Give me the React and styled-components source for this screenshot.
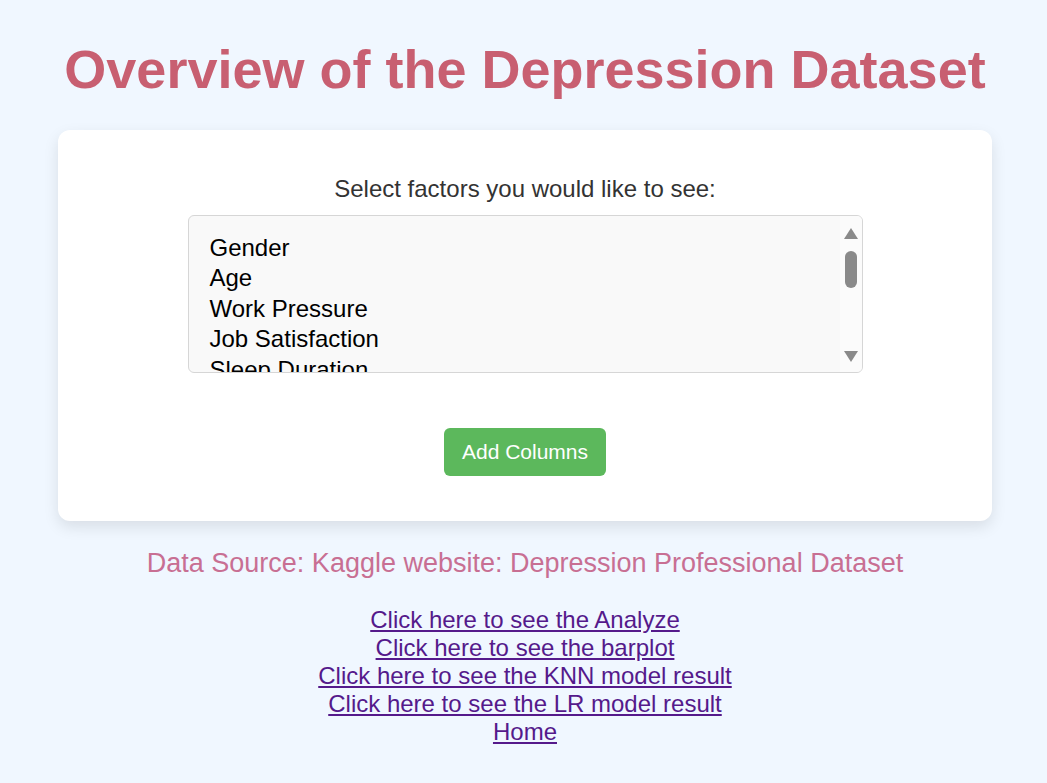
import React from 'react'
import styled, { createGlobalStyle } from 'styled-components'

const factors = [
  'Gender',
  'Age',
  'Work Pressure',
  'Job Satisfaction',
  'Sleep Duration',
  'Dietary Habits',
  'Have you ever had suicidal thoughts ?',
  'Work Hours',
  'Financial Stress',
  'Family History of Mental Illness'
]

const links = [
  'Click here to see the Analyze',
  'Click here to see the barplot',
  'Click here to see the KNN model result',
  'Click here to see the LR model result',
  'Home'
]

const App = () => {
  return (<>
    <GlobalStyle />
    <Page>
      <Title>Overview of the Depression Dataset</Title>
      <Card>
        <Label>Select factors you would like to see:</Label>
        <ListBox role='listbox' aria-multiselectable='true'>
          <OptionList>
            {factors.map((f) => (
              <Option key={f} role='option'>{f}</Option>
            ))}
          </OptionList>
          <ScrollTrack>
            <Arrow $dir='up' />
            <Thumb />
            <Spacer />
            <Arrow $dir='down' />
          </ScrollTrack>
        </ListBox>
        <AddButton type='button'>Add Columns</AddButton>
      </Card>
      <Source>Data Source: Kaggle website: Depression Professional Dataset</Source>
      <Links>
        {links.map((l) => (
          <Link key={l} href='#'>{l}</Link>
        ))}
      </Links>
    </Page>
  </>)
}

const GlobalStyle = createGlobalStyle`
  html, body {
    margin: 0;
    background: #f0f7ff;
  }
  body {
    font-family: "Liberation Sans", Arial, sans-serif;
  }
`

const Page = styled.div`
  display: flex;
  flex-direction: column;
  align-items: center;
  min-height: 783px;
  padding: 0 0 30px 3px;
  box-sizing: border-box;
`

const Title = styled.h1`
  font-size: 54px;
  font-weight: bold;
  color: #c85f71;
  margin: 38px 0 30px;
  text-align: center;
`

const Card = styled.div`
  width: 934px;
  box-sizing: border-box;
  background: #fff;
  border-radius: 12px;
  box-shadow: 0 6px 15px rgba(0, 0, 0, 0.1);
  padding: 45px 0;
  display: flex;
  flex-direction: column;
  align-items: center;
`

const Label = styled.label`
  font-size: 24px;
  color: #333;
  margin-bottom: 12px;
`

const ListBox = styled.div`
  width: 675px;
  height: 158px;
  box-sizing: border-box;
  display: flex;
  background: #f9f9f9;
  border: 1px solid #d6d6d6;
  border-radius: 6px;
  overflow: hidden;
  margin-bottom: 55px;
`

const OptionList = styled.div`
  flex: 1;
  overflow: hidden;
  padding: 17px 19px 15px 21px;
`

const Option = styled.div`
  font-size: 24px;
  line-height: 30.4px;
  color: #000;
  white-space: nowrap;
`

const ScrollTrack = styled.div`
  width: 22px;
  display: flex;
  flex-direction: column;
  align-items: center;
  padding: 12px 0 10px;
  background: #fbfbfb;
`

const Arrow = styled.div`
  width: 0;
  height: 0;
  border-left: 7.5px solid transparent;
  border-right: 7.5px solid transparent;
  ${({ $dir }) => $dir === 'up'
    ? 'border-bottom: 11px solid #8a8a8a;'
    : 'border-top: 11px solid #8a8a8a;'}
`

const Thumb = styled.div`
  width: 12px;
  height: 37px;
  margin-top: 12px;
  border-radius: 6px;
  background: #8a8a8a;
`

const Spacer = styled.div`
  flex: 1;
`

const AddButton = styled.button`
  font-family: inherit;
  font-size: 21px;
  color: #fff;
  background: #5cb85c;
  border: none;
  border-radius: 6px;
  padding: 12px 18px;
  cursor: pointer;
`

const Source = styled.p`
  font-size: 27px;
  color: #c86f93;
  margin: 27px 0 27px;
  text-align: center;
`

const Links = styled.div`
  display: flex;
  flex-direction: column;
  align-items: center;
`

const Link = styled.a`
  font-size: 24px;
  line-height: 28px;
  color: #551a8b;
  text-decoration: underline;
`

export default App
